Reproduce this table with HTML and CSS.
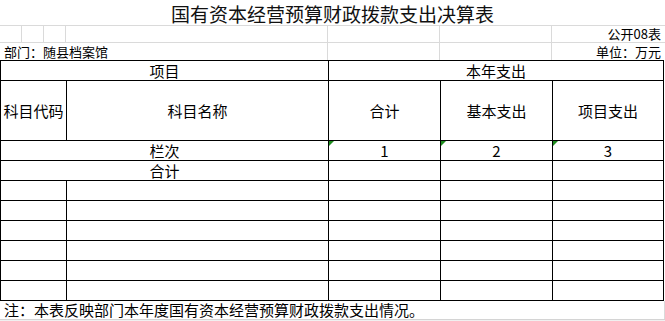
FILE: index.html
```html
<!DOCTYPE html>
<html lang="zh">
<head>
<meta charset="utf-8">
<title>国有资本经营预算财政拨款支出决算表</title>
<link rel="stylesheet" href="styles.css">
</head>
<body>
<div class="sheet">
  <div class="title">国有资本经营预算财政拨款支出决算表</div>
  <div class="meta">
    <div class="mc"></div>
    <div class="mc"></div>
    <div class="mc"></div>
    <div class="mc"></div>
    <div class="mc"></div>
    <div class="mc"></div>
    <div class="mc right">公开08表</div>
  </div>
  <div class="meta meta-second">
    <div class="mc left span4">部门：随县档案馆</div>
    <div class="mc"></div>
    <div class="mc"></div>
    <div class="mc right">单位：万元</div>
  </div>
  <table class="grid">
    <colgroup>
      <col class="c1"><col class="c2"><col class="c3"><col class="c4"><col class="c5">
    </colgroup>
    <tr class="r20">
      <td colspan="2">项目</td>
      <td colspan="3">本年支出</td>
    </tr>
    <tr class="r60">
      <td>科目代码</td>
      <td>科目名称</td>
      <td>合计</td>
      <td>基本支出</td>
      <td>项目支出</td>
    </tr>
    <tr class="r20">
      <td colspan="2">栏次</td>
      <td class="flag">1</td>
      <td class="flag">2</td>
      <td class="flag">3</td>
    </tr>
    <tr class="r20">
      <td colspan="2">合计</td>
      <td></td><td></td><td></td>
    </tr>
    <tr class="r20"><td></td><td></td><td></td><td></td><td></td></tr>
    <tr class="r20"><td></td><td></td><td></td><td></td><td></td></tr>
    <tr class="r20"><td></td><td></td><td></td><td></td><td></td></tr>
    <tr class="r20"><td></td><td></td><td></td><td></td><td></td></tr>
    <tr class="r20"><td></td><td></td><td></td><td></td><td></td></tr>
    <tr class="r20"><td></td><td></td><td></td><td></td><td></td></tr>
  </table>
  <div class="note">注：本表反映部门本年度国有资本经营预算财政拨款支出情况。</div>
  <div class="foot"></div>
</div>
</body>
</html>
```

FILE: styles.css
```css
html, body {
  margin: 0;
  padding: 0;
  background: #ffffff;
}
body {
  font-family: "Noto Sans CJK SC", "Liberation Sans", sans-serif;
  color: #000;
}
.sheet {
  width: 665px;
}
.title {
  height: 22px;
  padding-top: 3px;
  border-bottom: 1px solid #dadada;
  font-size: 19px;
  line-height: 22px;
  text-align: center;
  color: #111;
}
.meta {
  display: grid;
  grid-template-columns: 22px 22px 22px 262px 112px 112px 111px 2px;
  height: 16px;
  border-bottom: 1px solid #dadada;
  font-size: 13px;
  line-height: 16px;
}
.meta-second {
  border-bottom: none;
  height: 17px;
  line-height: 17px;
}
.mc {
  border-right: 1px solid #dadada;
  white-space: nowrap;
}
.mc.span4 {
  grid-column: span 4;
  padding-left: 4px;
}
.mc.right {
  text-align: right;
  padding-right: 2px;
  border-right: none;
}
.grid {
  border-collapse: collapse;
  table-layout: fixed;
  width: 664px;
  font-size: 15px;
}
.grid td {
  border: 1px solid #000;
  padding: 0;
  text-align: center;
  vertical-align: middle;
  line-height: 18px;
  white-space: nowrap;
}
.c1 { width: 66px; }
.c2 { width: 262px; }
.c3 { width: 112px; }
.c4 { width: 112px; }
.c5 { width: 111px; }
.r20 td { height: 19px; }
.r60 td { height: 59px; }
.grid td.flag {
  position: relative;
}
.grid td.flag::before {
  content: "";
  position: absolute;
  left: 0;
  top: 0;
  width: 0;
  height: 0;
  border-top: 5px solid #1e8c1e;
  border-right: 5px solid transparent;
}
.note {
  height: 18px;
  font-size: 15px;
  line-height: 18px;
  padding-left: 4px;
  border-right: 1px solid #dadada;
  width: 660px;
  white-space: nowrap;
}
.foot {
  height: 3px;
  border-top: 1px solid #d4d4d4;
  background: #f0f0f0;
}
```
